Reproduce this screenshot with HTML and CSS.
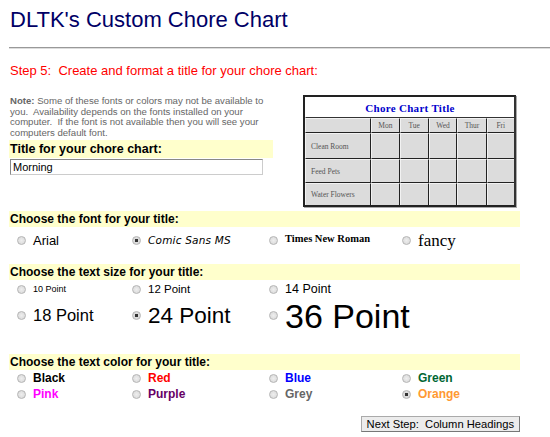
FILE: index.html
```html
<!DOCTYPE html>
<html>
<head>
<meta charset="utf-8">
<link rel="stylesheet" href="styles.css">
</head>
<body>
<div class="page">
  <h1 class="title">DLTK's Custom Chore Chart</h1>
  <hr class="rule">
  <p class="step">Step 5:&nbsp; Create and format a title for your chore chart:</p>

  <div class="top">
    <div class="left">
      <p class="note"><b>Note:</b> Some of these fonts or colors may not be available to you.&nbsp; Availability depends on the fonts installed on your computer.&nbsp; If the font is not available then you will see your computers default font.</p>
      <div class="band band-short">Title for your chore chart:</div>
      <input class="text-input" type="text" value="Morning">
    </div>
    <table class="chart">
      <tr><td class="chart-title" colspan="6">Chore Chart Title</td></tr>
      <tr class="head"><td class="first"></td><td>Mon</td><td>Tue</td><td>Wed</td><td>Thur</td><td>Fri</td></tr>
      <tr class="r1"><td class="first">Clean Room</td><td></td><td></td><td></td><td></td><td></td></tr>
      <tr class="r2"><td class="first">Feed Pets</td><td></td><td></td><td></td><td></td><td></td></tr>
      <tr class="r3"><td class="first">Water Flowers</td><td></td><td></td><td></td><td></td><td></td></tr>
    </table>
  </div>

  <div class="band band-font">Choose the font for your title:</div>
  <div class="opts opts-font">
    <label class="opt"><input type="radio" name="f"><span class="f-arial">Arial</span></label>
    <label class="opt"><input type="radio" name="f" checked><span class="f-comic">Comic Sans MS</span></label>
    <label class="opt"><input type="radio" name="f"><span class="f-times">Times New Roman</span></label>
    <label class="opt"><input type="radio" name="f"><span class="f-fancy">fancy</span></label>
  </div>

  <div class="band band-size">Choose the text size for your title:</div>
  <div class="opts opts-size1">
    <label class="opt"><input type="radio" name="s"><span class="s10">10 Point</span></label>
    <label class="opt"><input type="radio" name="s"><span class="s12">12 Point</span></label>
    <label class="opt"><input type="radio" name="s"><span class="s14">14 Point</span></label>
  </div>
  <div class="opts opts-size2">
    <label class="opt"><input type="radio" name="s"><span class="s18">18 Point</span></label>
    <label class="opt"><input type="radio" name="s" checked><span class="s24">24 Point</span></label>
    <label class="opt"><input type="radio" name="s"><span class="s36">36 Point</span></label>
  </div>

  <div class="band band-color">Choose the text color for your title:</div>
  <div class="opts opts-color">
    <label class="opt"><input type="radio" name="c"><span class="c-black">Black</span></label>
    <label class="opt"><input type="radio" name="c"><span class="c-red">Red</span></label>
    <label class="opt"><input type="radio" name="c"><span class="c-blue">Blue</span></label>
    <label class="opt"><input type="radio" name="c"><span class="c-green">Green</span></label>
    <label class="opt"><input type="radio" name="c"><span class="c-pink">Pink</span></label>
    <label class="opt"><input type="radio" name="c"><span class="c-purple">Purple</span></label>
    <label class="opt"><input type="radio" name="c"><span class="c-grey">Grey</span></label>
    <label class="opt"><input type="radio" name="c" checked><span class="c-orange">Orange</span></label>
  </div>

  <div class="actions">
    <button class="next" type="button">Next Step:&nbsp; Column Headings</button>
  </div>
</div>
</body>
</html>
```
FILE: styles.css
```css
html, body {
  margin: 0;
  padding: 0;
  background: #fff;
}
body {
  font-family: "Liberation Sans", Arial, sans-serif;
  color: #000;
}
.page {
  padding: 0 0 0 9px;
}
.title {
  margin: 0;
  padding: 7px 0 0 1px;
  font-size: 22px;
  line-height: 26px;
  font-weight: normal;
  color: #000066;
}
.rule {
  margin: 14px 0 0 0;
  border: 0;
  border-top: 1px solid #999;
  border-bottom: 1px solid #ddd;
  height: 0;
}
.step {
  margin: 14px 0 0 1px;
  font-size: 13px;
  line-height: 16px;
  color: #ff0000;
}
.top {
  display: flex;
  align-items: flex-start;
  margin-top: 15px;
}
.left {
  width: 264px;
  padding-top: 2px;
}
.note {
  margin: 0 0 0 1px;
  font-size: 9.6px;
  line-height: 10.6px;
  color: #666;
  width: 262px;
}
.note b { color: #666; }
.band {
  background: #ffffcc;
  font-weight: bold;
  font-size: 12px;
  line-height: 16px;
  padding-left: 1px;
  width: 510px;
}
.band-short {
  width: 263px;
  margin-top: 2px;
  line-height: 18px;
  font-size: 12.5px;
}
.text-input {
  display: block;
  box-sizing: border-box;
  margin: 1px 0 0 1px;
  width: 253px;
  height: 16px;
  padding: 0 2px;
  border: 1px solid #888;
  border-bottom-color: #ccc;
  border-right-color: #ccc;
  font-family: "Liberation Sans", Arial, sans-serif;
  font-size: 11px;
  color: #000;
}
.chart {
  margin-left: 30px;
  margin-top: 1px;
  border-collapse: separate;
  border-spacing: 0;
  border: 2px solid #222;
  border-right-color: #333;
  width: 213px;
  font-family: "Liberation Serif", "Times New Roman", serif;
  font-size: 7.5px;
  color: #555;
  box-shadow: 1px 1px 0 #aaa;
}
.chart td {
  background: #dcdcdc;
  border: 1px solid #f2f2f2;
  border-right-color: #222;
  border-bottom-color: #222;
  padding: 0;
  width: 29px;
  text-align: center;
}
.chart td.first {
  width: 64px;
  text-align: left;
  padding-left: 5px;
}
.chart td.chart-title {
  background: #fff;
  color: #0000cc;
  font-weight: bold;
  font-size: 11px;
  letter-spacing: 0.3px;
  height: 19px;
  border-color: #fff #fff #333 #fff;
}
.chart .head td { height: 13px; }
.chart .r1 td { height: 24px; }
.chart .r2 td { height: 22px; }
.chart .r3 td { height: 21px; border-bottom: 0; }
.chart td:last-child { border-right: 0; }

.band-font { margin-top: 4px; }
.band-size { margin-top: 15px; }
.band-color { margin-top: 21px; }

.opts {
  display: grid;
  grid-template-columns: 115px 137px 133px 1fr;
  padding-left: 7px;
  width: 510px;
}
.opt {
  display: flex;
  align-items: center;
  color: #000;
  white-space: nowrap;
}
.opt input {
  -webkit-appearance: none;
  appearance: none;
  box-sizing: border-box;
  width: 9px;
  height: 9px;
  margin: 0 7px 0 1px;
  border-radius: 50%;
  border: 1px solid #b5b5b5;
  background: radial-gradient(circle, #eee 0, #d6d6d6 100%);
  flex: none;
}
.opt input:checked {
  background: radial-gradient(circle, #333 0, #333 1.5px, #ddd 2px, #d6d6d6 100%);
}

.opts-font { margin-top: 3px; height: 19px; align-items: center; }
.f-arial { font-size: 13px; }
.f-comic { font-family: "DejaVu Sans", sans-serif; font-style: oblique; font-size: 10.5px; letter-spacing: 0.2px; }
.f-times { font-family: "Liberation Serif", serif; font-weight: bold; font-size: 10.5px; position: relative; top: -2px; }
.f-fancy { font-family: "Liberation Serif", serif; font-size: 17px; position: relative; top: 1px; }

.opts-size1 { margin-top: 0; height: 18px; align-items: center; }
.opts-size2 { height: 35px; align-items: center; }
.s10 { font-size: 9px; }
.s12 { font-size: 11.5px; }
.s14 { font-size: 12.5px; }
.s18 { font-size: 16.5px; }
.s24 { font-size: 22.5px; }
.s36 { font-size: 34px; line-height: 34px; }

.opts-color { margin-top: 0; grid-auto-rows: 16px; }
.opts-color span { font-size: 12px; font-weight: bold; }
.c-black { color: #000; }
.c-red { color: #ff0000; }
.c-blue { color: #0000ff; }
.c-green { color: #006633; }
.c-pink { color: #ff00ff; }
.c-purple { color: #660066; }
.c-grey { color: #666666; }
.c-orange { color: #ff9933; }

.actions {
  display: flex;
  justify-content: flex-end;
  width: 511px;
  margin-top: 14px;
}
.next {
  font-family: "Liberation Sans", Arial, sans-serif;
  font-size: 11.2px;
  height: 16px;
  padding: 0 5px;
  line-height: 12px;
  background: #ececec;
  border: 1px solid #777;
  border-top-color: #aaa;
  border-left-color: #aaa;
  color: #000;
}
```
